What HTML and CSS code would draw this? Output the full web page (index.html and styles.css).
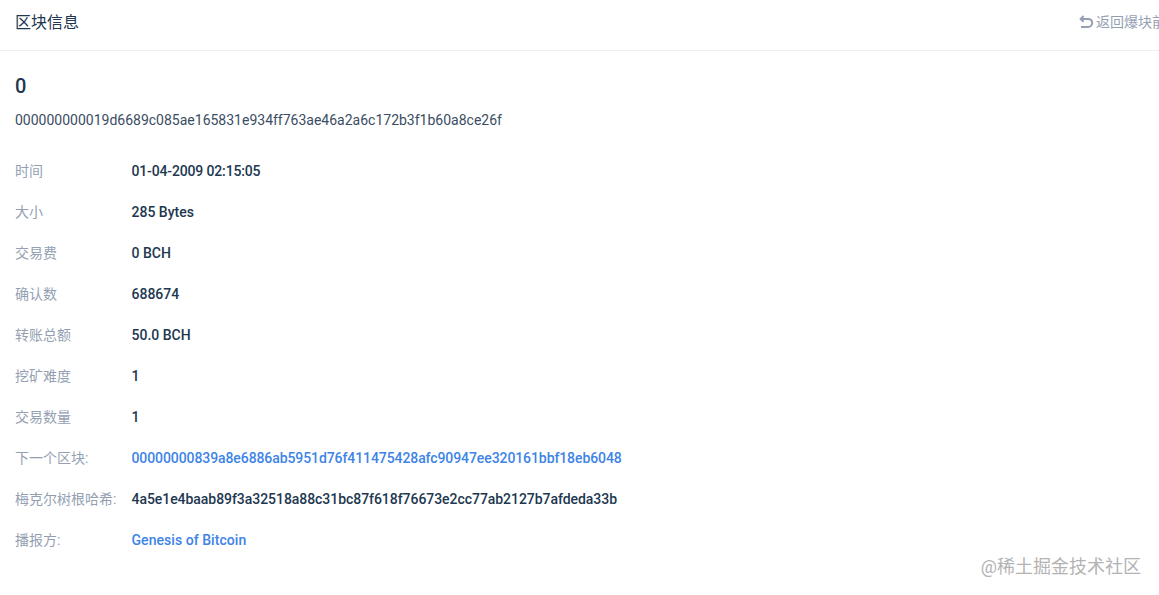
FILE: index.html
```html
<!DOCTYPE html>
<html lang="zh-CN">
<head>
    <meta charset="UTF-8">
    <meta name="viewport" content="width=device-width, initial-scale=1.0">
    <title>区块信息</title>
    <link rel="stylesheet" href="styles.css">
</head>
<body>
    <div class="header">
        <span class="header-title">区块信息</span>
        <a class="back-link">
            <svg class="back-icon" viewBox="0 0 14 14" width="14" height="14">
                <path d="M4.6 1 1.7 3.9 4.6 6.8M1.7 3.9H9.2a4 4 0 0 1 0 8H2" fill="none" stroke="currentColor" stroke-width="2"/>
            </svg>
            <span>返回爆块前</span>
        </a>
    </div>
    <div class="content">
        <div class="block-height">0</div>
        <div class="block-hash">000000000019d6689c085ae165831e934ff763ae46a2a6c172b3f1b60a8ce26f</div>
        <div class="info-list">
            <div class="info-row"><span class="info-label">时间</span><span class="info-value info-date">01-04-2009 02:15:05</span></div>
            <div class="info-row"><span class="info-label">大小</span><span class="info-value">285 Bytes</span></div>
            <div class="info-row"><span class="info-label">交易费</span><span class="info-value">0 BCH</span></div>
            <div class="info-row"><span class="info-label">确认数</span><span class="info-value">688674</span></div>
            <div class="info-row"><span class="info-label">转账总额</span><span class="info-value">50.0 BCH</span></div>
            <div class="info-row"><span class="info-label">挖矿难度</span><span class="info-value">1</span></div>
            <div class="info-row"><span class="info-label">交易数量</span><span class="info-value">1</span></div>
            <div class="info-row"><span class="info-label">下一个区块:</span><a class="info-value info-link info-next">00000000839a8e6886ab5951d76f411475428afc90947ee320161bbf18eb6048</a></div>
            <div class="info-row"><span class="info-label">梅克尔树根哈希:</span><span class="info-value info-root">4a5e1e4baab89f3a32518a88c31bc87f618f76673e2cc77ab2127b7afdeda33b</span></div>
            <div class="info-row"><span class="info-label">播报方:</span><a class="info-value info-link info-name">Genesis of Bitcoin</a></div>
        </div>
    </div>
    <div class="watermark">@稀土掘金技术社区</div>
</body>
</html>
```

FILE: styles.css
```css
html, body {
    height: 100%;
}
body {
    font-family: Roboto, "Noto Sans CJK SC", sans-serif;
    background-color: #fff;
    margin: 0;
    color: #213750;
    font-size: 14px;
    overflow: hidden;
    position: relative;
}
.header {
    display: flex;
    justify-content: space-between;
    align-items: center;
    box-sizing: border-box;
    height: 51px;
    padding: 0 0 8px 15px;
    border-bottom: 1px solid #eeeff1;
    white-space: nowrap;
}
.header-title {
    font-size: 16px;
    color: #213750;
}
.back-link {
    display: flex;
    align-items: center;
    gap: 3px;
    flex: none;
    width: 80px;
    color: #949fb2;
    overflow: hidden;
}
.back-icon {
    flex: none;
    margin-top: 2px;
}
.content {
    padding: 0 15px;
}
.block-height {
    margin-top: 21px;
    font-size: 20px;
    font-weight: 500;
    line-height: 28px;
}
.block-hash {
    margin-top: 10px;
    line-height: 20px;
    color: #3a4d63;
}
.info-list {
    margin-top: 20px;
}
.info-row {
    display: flex;
    align-items: center;
    height: 41px;
}
.info-label {
    flex: none;
    width: 116.5px;
    padding-bottom: 2px;
    color: #949fb2;
}
.info-value {
    font-weight: 500;
}
.info-date {
    letter-spacing: -0.15px;
}
.info-next {
    letter-spacing: -0.09px;
}
.info-root {
    letter-spacing: -0.05px;
}
.info-name {
    letter-spacing: 0.05px;
}
.info-link {
    color: #3d84e6;
}
.watermark {
    position: absolute;
    right: 18px;
    bottom: 17px;
    font-size: 18px;
    color: #b3b3b3;
}
```
